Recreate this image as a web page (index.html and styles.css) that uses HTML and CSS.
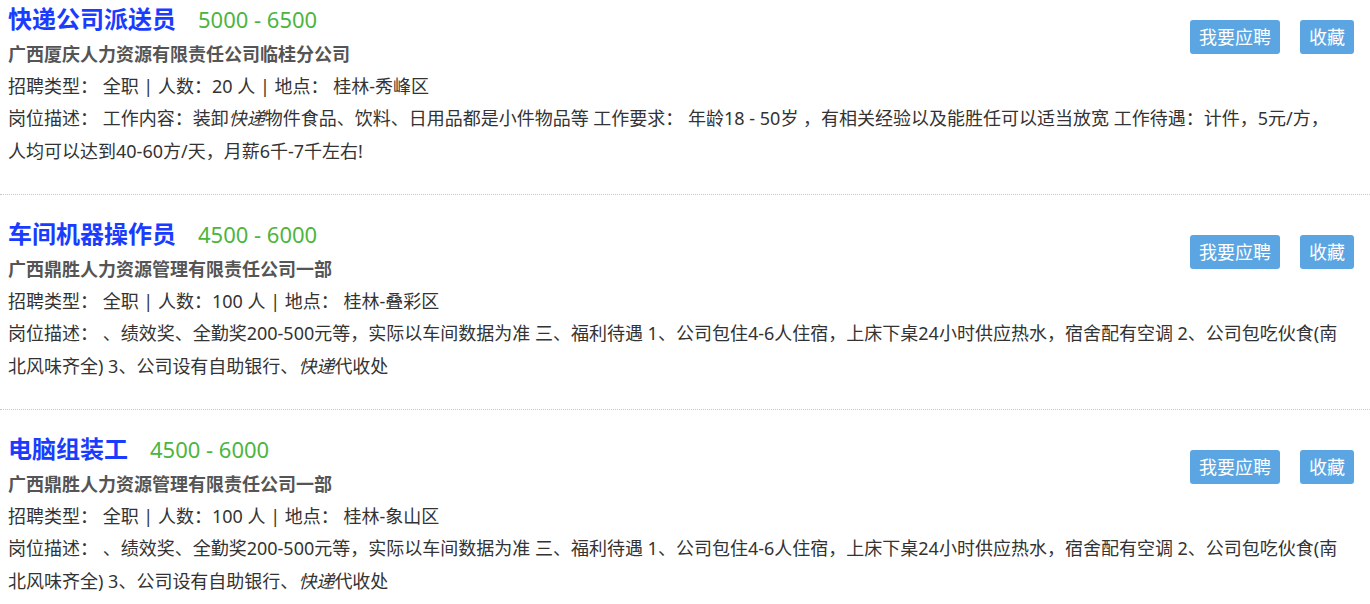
FILE: index.html
```html
<!DOCTYPE html>
<html lang="zh-CN">
<head>
    <meta charset="UTF-8">
    <meta name="viewport" content="width=device-width, initial-scale=1.0">
    <title>招聘信息</title>
    <link rel="stylesheet" href="styles.css">
</head>
<body>

    <ul class="job-list">
        <li class="job">
            <div class="actions">
                <a class="btn" href="#">我要应聘</a>
                <a class="btn" href="#">收藏</a>
            </div>
            <h2 class="job-title">快递公司派送员<span class="salary">5000 - 6500</span></h2>
            <p class="company">广西厦庆人力资源有限责任公司临桂分公司</p>
            <p class="meta">招聘类型：&nbsp;全职 | 人数：20 人 | 地点：&nbsp;桂林-秀峰区</p>
            <p class="desc">岗位描述：&nbsp;工作内容：装卸<em>快递</em>物件食品、饮料、日用品都是小件物品等 工作要求：&nbsp;年龄18 - 50岁 ，有相关经验以及能胜任可以适当放宽 工作待遇：计件，5元/方，人均可以达到40-60方/天，月薪6千-7千左右!</p>
        </li>
        <li class="job">
            <div class="actions">
                <a class="btn" href="#">我要应聘</a>
                <a class="btn" href="#">收藏</a>
            </div>
            <h2 class="job-title">车间机器操作员<span class="salary">4500 - 6000</span></h2>
            <p class="company">广西鼎胜人力资源管理有限责任公司一部</p>
            <p class="meta">招聘类型：&nbsp;全职 | 人数：100 人 | 地点：&nbsp;桂林-叠彩区</p>
            <p class="desc">岗位描述：&nbsp;、绩效奖、全勤奖200-500元等，实际以车间数据为准 三、福利待遇 1、公司包住4-6人住宿，上床下桌24小时供应热水，宿舍配有空调 2、公司包吃伙食(南北风味齐全) 3、公司设有自助银行、<em>快递</em>代收处</p>
        </li>
        <li class="job">
            <div class="actions">
                <a class="btn" href="#">我要应聘</a>
                <a class="btn" href="#">收藏</a>
            </div>
            <h2 class="job-title">电脑组装工<span class="salary">4500 - 6000</span></h2>
            <p class="company">广西鼎胜人力资源管理有限责任公司一部</p>
            <p class="meta">招聘类型：&nbsp;全职 | 人数：100 人 | 地点：&nbsp;桂林-象山区</p>
            <p class="desc">岗位描述：&nbsp;、绩效奖、全勤奖200-500元等，实际以车间数据为准 三、福利待遇 1、公司包住4-6人住宿，上床下桌24小时供应热水，宿舍配有空调 2、公司包吃伙食(南北风味齐全) 3、公司设有自助银行、<em>快递</em>代收处</p>
        </li>
    </ul>

</body>
</html>
```
FILE: styles.css
```css
body {
    margin: 0;
    font-family: "Noto Sans", "Noto Sans CJK SC", sans-serif;
    color: #333;
    background-color: #fff;
}

.job-list {
    list-style: none;
    margin: 0;
    padding: 0;
}

.job {
    padding: 20px 16px 26px 8px;
    border-bottom: 1px dotted #c8c8c8;
}

.job:first-child {
    padding-top: 0;
}

.job-title {
    margin: 0;
    font-size: 24px;
    line-height: 38px;
    font-weight: bold;
    color: #1a3cff;
}

.salary {
    margin-left: 22px;
    font-size: 22px;
    font-weight: normal;
    color: #4cb53e;
}

.company {
    margin: 0;
    font-size: 18px;
    line-height: 32px;
    font-weight: bold;
    color: #555;
}

.meta {
    margin: 0;
    font-size: 18px;
    line-height: 32px;
}

.desc {
    margin: 0 12px 0 0;
    font-size: 18px;
    line-height: 33px;
}

.desc em {
    font-style: italic;
}

.actions {
    float: right;
    display: flex;
    gap: 20px;
    margin-top: 20px;
}

.btn {
    display: block;
    padding: 0 9px;
    height: 34px;
    line-height: 34px;
    font-size: 18px;
    color: #fff;
    text-decoration: none;
    background-color: #5ba6e2;
    border-radius: 3px;
}
```
